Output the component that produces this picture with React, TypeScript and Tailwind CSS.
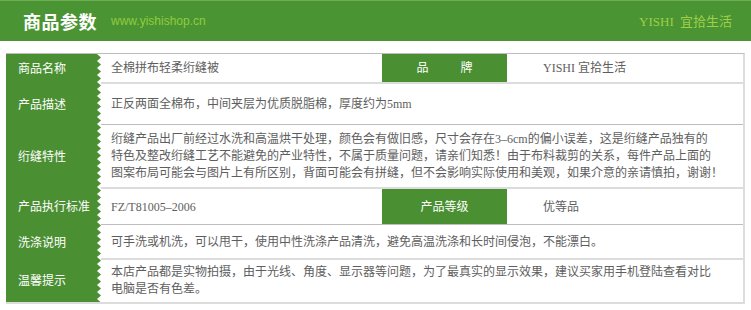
const serif = '"Liberation Serif", "Noto Sans CJK SC", serif';

function Zigzag() {
  // teeth along the right edge of the green label column
  return (
    <svg className="block h-full w-[5px]" preserveAspectRatio="none">
      <defs>
        <pattern id="teeth" width="5" height="7" patternUnits="userSpaceOnUse">
          <polygon points="0,0 1,0 5,3.5 1,7 0,7" fill="#4a9032" />
        </pattern>
      </defs>
      <rect width="5" height="100%" fill="url(#teeth)" />
    </svg>
  );
}

const labels = ['商品名称', '产品描述', '绗缝特性', '产品执行标准', '洗涤说明', '温馨提示'];

export default function App() {
  return (
    <div className="w-[751px] h-[310px] bg-white overflow-hidden" style={{ fontFamily: serif }}>
      {/* header bar */}
      <div className="h-[41px] bg-[#4b9434] border-t border-[#6fae55] flex items-center pl-[23px] pr-[19px]">
        <span className="text-white font-bold text-[18px] tracking-[0.5px]" style={{ fontFamily: '"Noto Sans CJK SC", sans-serif' }}>
          商品参数
        </span>
        <span className="ml-[14px] text-[12px] text-[#8fcc3c]" style={{ fontFamily: '"Liberation Sans", Arial, sans-serif' }}>
          www.yishishop.cn
        </span>
        <span className="ml-auto text-[13px] text-[#9dd046]">
          YISHI <span style={{ fontFamily: '"Noto Sans CJK SC", sans-serif' }} className="ml-[3px]">宜拾生活</span>
        </span>
      </div>

      {/* parameter table */}
      <div className="mt-[12px] ml-[6px] w-[739px] border-t border-[#bdbdbd] border-r-2 border-r-[#dcdcdc] border-b-2 border-b-[#dcdcdc] grid grid-cols-[90px_5px_13px_268px_125px_236px] grid-rows-[30px_41px_64px_36px_35px_42px] text-[12px] text-[#5e5e5e]">
        {labels.map((l, i) => (
          <div
            key={l}
            className="col-start-1 bg-[#4a9032] text-white text-[12px] flex items-center pl-[12px]"
            style={{ gridRowStart: i + 1 }}
          >
            {l}
          </div>
        ))}
        <div className="col-start-2 row-start-1 row-span-6">
          <Zigzag />
        </div>

        {/* row 1 */}
        <div className="col-start-3 col-span-2 row-start-1 border-b-2 border-[#dcdcdc] flex items-center pl-[10px]">
          全棉拼布轻柔绗缝被
        </div>
        <div className="col-start-5 row-start-1 border-b-2 border-[#dcdcdc] bg-[#4a9032] text-white flex items-center justify-center gap-[32px]">
          <span>品</span>
          <span>牌</span>
        </div>
        <div className="col-start-6 row-start-1 border-b-2 border-[#dcdcdc] flex items-center pl-[36px]">
          YISHI 宜拾生活
        </div>

        {/* row 2 */}
        <div className="col-start-3 col-span-4 row-start-2 border-b border-[#bdbdbd] flex items-center pl-[10px]">
          正反两面全棉布，中间夹层为优质脱脂棉，厚度约为5mm
        </div>

        {/* row 3 */}
        <div className="col-start-3 col-span-4 row-start-3 border-b-2 border-[#dcdcdc] flex items-center pl-[10px] pr-[10px] leading-[17px]">
          <p>
            绗缝产品出厂前经过水洗和高温烘干处理，颜色会有做旧感，尺寸会存在3–6cm的偏小误差，这是绗缝产品独有的
            <br />
            特色及整改绗缝工艺不能避免的产业特性，不属于质量问题，请亲们知悉！由于布料裁剪的关系，每件产品上面的
            <br />
            图案布局可能会与图片上有所区别，背面可能会有拼缝，但不会影响实际使用和美观，如果介意的亲请慎拍，谢谢！
          </p>
        </div>

        {/* row 4 */}
        <div className="col-start-3 col-span-2 row-start-4 border-b border-[#bdbdbd] flex items-center pl-[10px]">
          FZ/T81005–2006
        </div>
        <div className="col-start-5 row-start-4 border-b border-[#bdbdbd] bg-[#4a9032] text-white flex items-center justify-center">
          产品等级
        </div>
        <div className="col-start-6 row-start-4 border-b border-[#bdbdbd] flex items-center pl-[36px]">
          优等品
        </div>

        {/* row 5 */}
        <div className="col-start-3 col-span-4 row-start-5 border-b-2 border-[#dcdcdc] flex items-center pl-[10px]">
          可手洗或机洗，可以甩干，使用中性洗涤产品清洗，避免高温洗涤和长时间侵泡，不能漂白。
        </div>

        {/* row 6 */}
        <div className="col-start-3 col-span-4 row-start-6 flex items-center pl-[10px] leading-[17px]">
          <p>
            本店产品都是实物拍摄，由于光线、角度、显示器等问题，为了最真实的显示效果，建议买家用手机登陆查看对比
            <br />
            电脑是否有色差。
          </p>
        </div>
      </div>
    </div>
  );
}
